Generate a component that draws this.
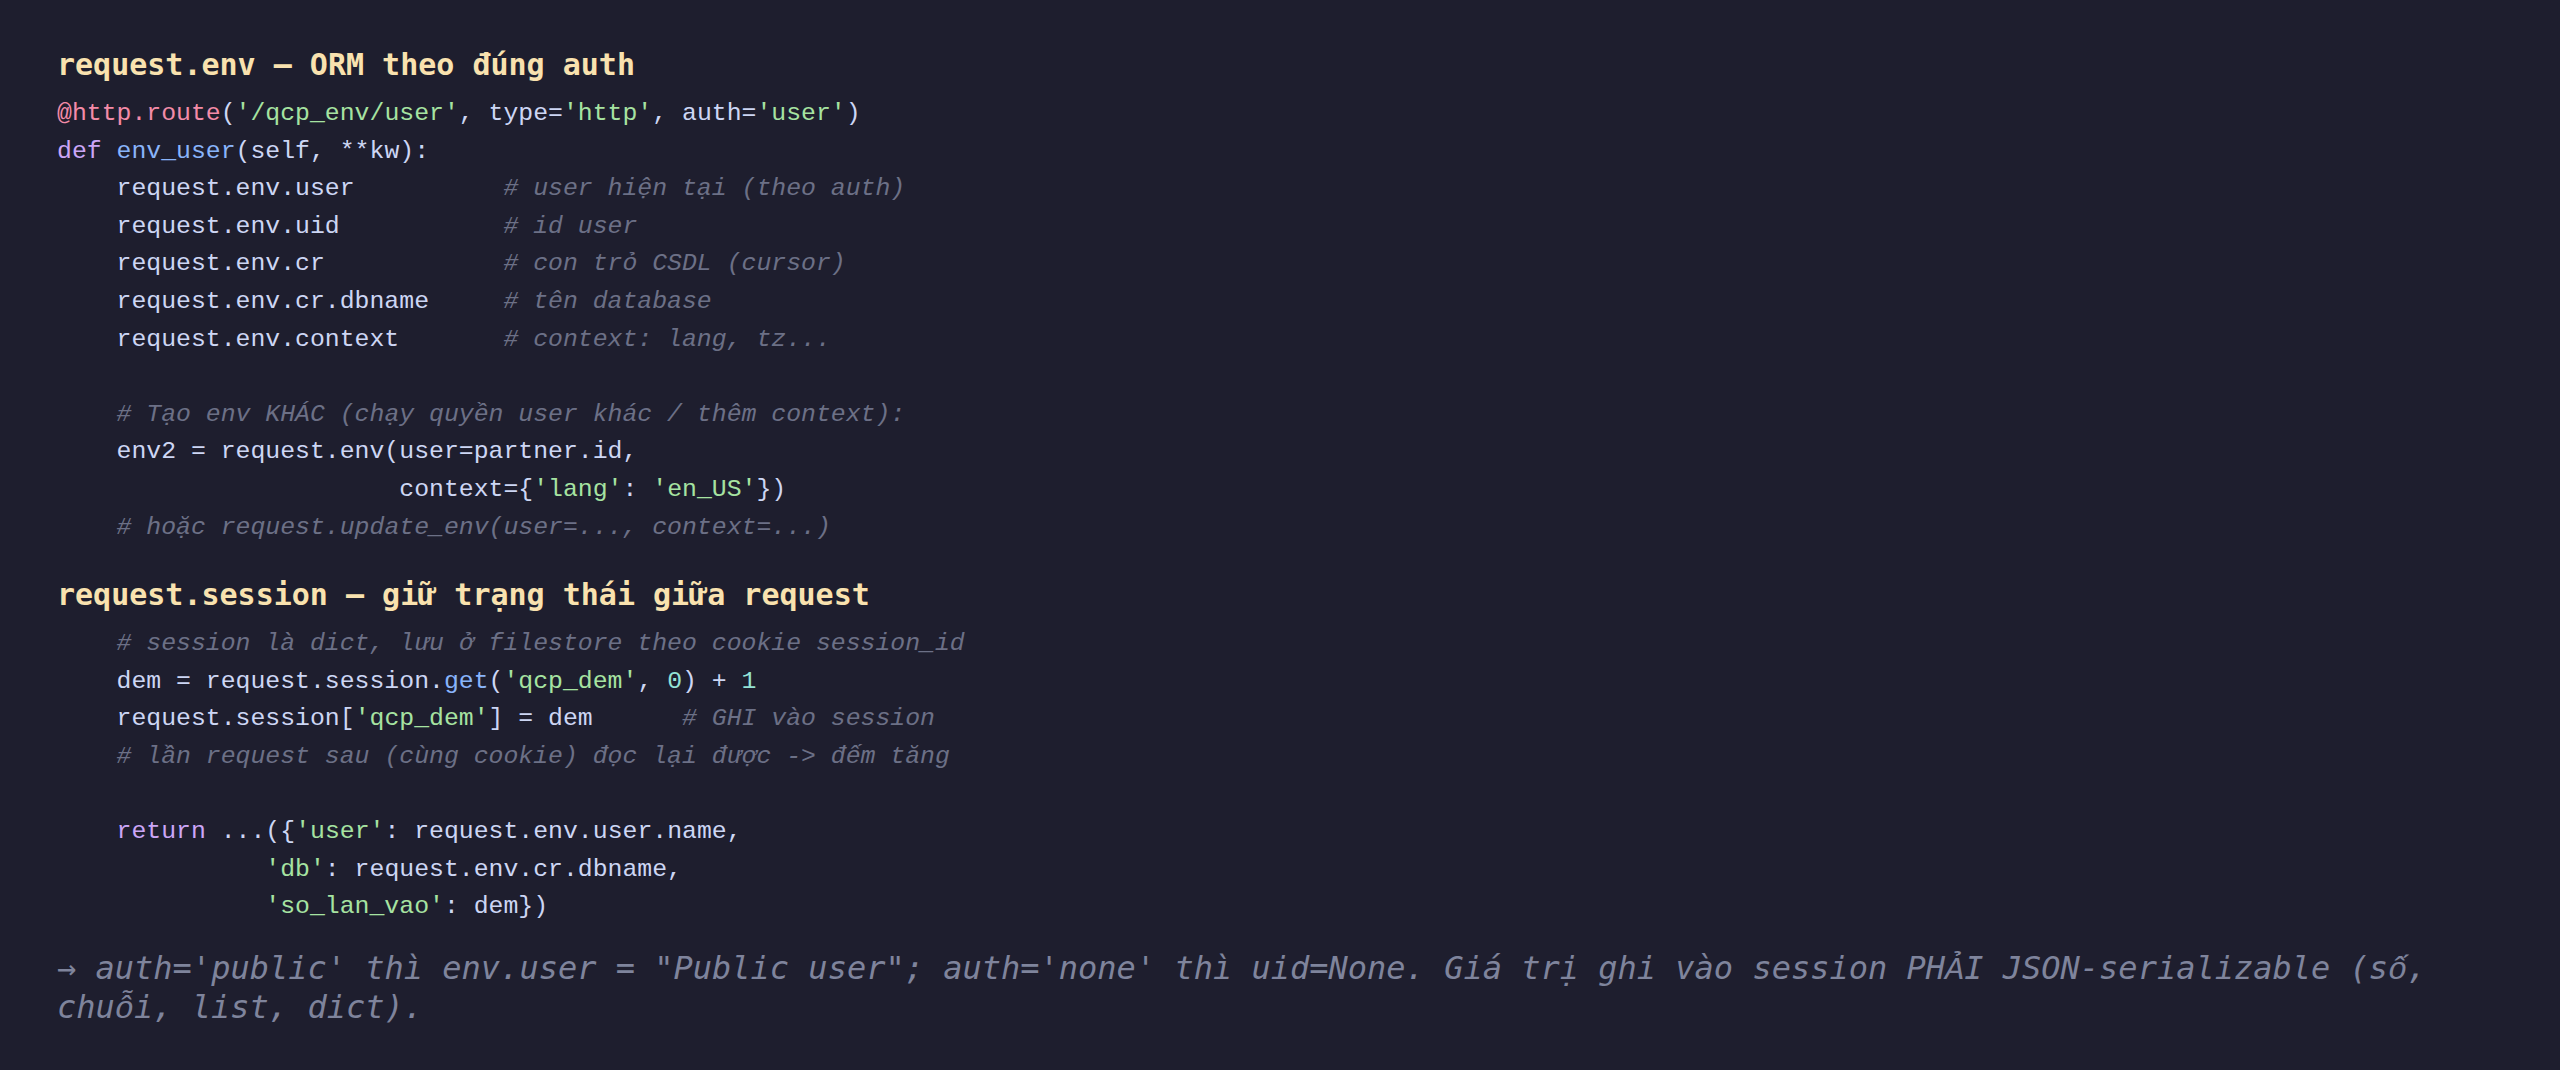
import React from "react";

const C = {
  txt: "text-[#cdd6f4]",
  com: "text-[#6c7086] italic",
  str: "text-[#a6e3a1]",
  kw: "text-[#cba6f7]",
  fn: "text-[#89b4fa]",
  dec: "text-[#f38ba8]",
  num: "text-[#94e2d5]",
};

const block1 = [
  [["@http.route", "dec"], ["(", "txt"], ["'/qcp_env/user'", "str"], [", type=", "txt"], ["'http'", "str"], [", auth=", "txt"], ["'user'", "str"], [")", "txt"]],
  [["def ", "kw"], ["env_user", "fn"], ["(self, **kw):", "txt"]],
  [["    request.env.user          ", "txt"], ["# user hiện tại (theo auth)", "com"]],
  [["    request.env.uid           ", "txt"], ["# id user", "com"]],
  [["    request.env.cr            ", "txt"], ["# con trỏ CSDL (cursor)", "com"]],
  [["    request.env.cr.dbname     ", "txt"], ["# tên database", "com"]],
  [["    request.env.context       ", "txt"], ["# context: lang, tz...", "com"]],
  [],
  [["    ", "txt"], ["# Tạo env KHÁC (chạy quyền user khác / thêm context):", "com"]],
  [["    env2 = request.env(user=partner.id,", "txt"]],
  [["                       context={", "txt"], ["'lang'", "str"], [": ", "txt"], ["'en_US'", "str"], ["})", "txt"]],
  [["    ", "txt"], ["# hoặc request.update_env(user=..., context=...)", "com"]],
];

const block2 = [
  [["    ", "txt"], ["# session là dict, lưu ở filestore theo cookie session_id", "com"]],
  [["    dem = request.session.", "txt"], ["get", "fn"], ["(", "txt"], ["'qcp_dem'", "str"], [", ", "txt"], ["0", "num"], [") + ", "txt"], ["1", "num"]],
  [["    request.session[", "txt"], ["'qcp_dem'", "str"], ["] = dem      ", "txt"], ["# GHI vào session", "com"]],
  [["    ", "txt"], ["# lần request sau (cùng cookie) đọc lại được -> đếm tăng", "com"]],
  [],
  [["    ", "txt"], ["return", "kw"], [" ...({", "txt"], ["'user'", "str"], [": request.env.user.name,", "txt"]],
  [["              ", "txt"], ["'db'", "str"], [": request.env.cr.dbname,", "txt"]],
  [["              ", "txt"], ["'so_lan_vao'", "str"], [": dem})", "txt"]],
];

function Code({ lines }) {
  return (
    <pre className="mt-[11px] font-['Liberation_Mono','DejaVu_Sans_Mono',monospace] text-[24.8px] leading-[37.6px] whitespace-pre">
      {lines.map((line, i) => (
        <div key={i} className="h-[37.6px]">
          {line.map(([t, k], j) => (
            <span key={j} className={C[k]}>
              {t}
            </span>
          ))}
        </div>
      ))}
    </pre>
  );
}

function Heading({ children, className = "" }) {
  return (
    <h2
      className={
        "font-['DejaVu_Sans_Mono',monospace] font-bold text-[30px] leading-[39px] text-[#f9e2af] " +
        className
      }
    >
      {children}
    </h2>
  );
}

// DejaVu Sans Mono lacks a few precomposed Vietnamese letters
function Vn({ children }) {
  return <span className="font-['Liberation_Mono',monospace]">{children}</span>;
}

export default function App() {
  return (
    <div className="min-h-screen w-full bg-[#1e1e2e] px-[57px] pt-[45px]">
      <Heading>request.env — ORM theo đúng auth</Heading>
      <Code lines={block1} />
      <Heading className="mt-[29px]">request.session — giữ trạng thái giữa request</Heading>
      <Code lines={block2} />
      <p className="mt-[24px] font-['DejaVu_Sans_Mono',monospace] italic text-[32px] leading-[37.6px] text-[#7f849c]">
        → auth='public' thì env.user = "Public user"; auth='none' thì uid=None. Giá trị ghi vào session PH<Vn>Ả</Vn>I JSON-serializable (s<Vn>ố</Vn>, chu<Vn>ỗ</Vn>i, list, dict).
      </p>
    </div>
  );
}
